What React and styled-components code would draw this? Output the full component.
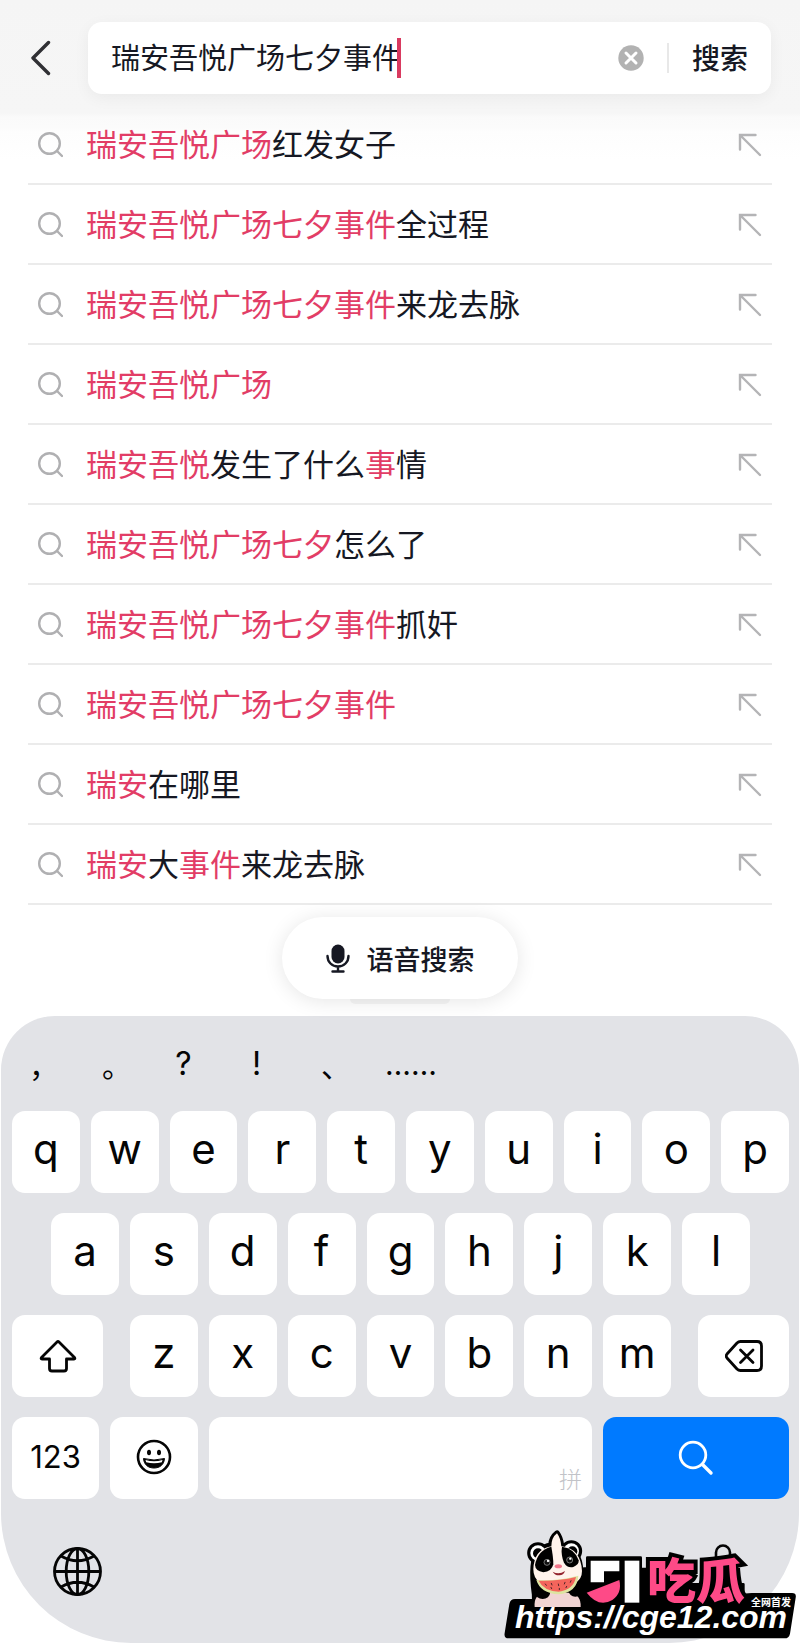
import React from 'react';
import styled, { createGlobalStyle } from 'styled-components';

const GlobalStyle = createGlobalStyle`
  *, *::before, *::after { box-sizing: border-box; }
  body {
    margin: 0;
    background: #fff;
    color: #161823;
    font-family: Inter, "Noto Sans CJK SC", sans-serif;
  }
  button, input { font: inherit; color: inherit; border: 0; padding: 0; background: none; }
  button { cursor: pointer; }
  svg { display: block; flex: none; }
`;

const Page = styled.div`
  position: relative;
  overflow: hidden;
  padding-bottom: 2px;
  background: linear-gradient(#f5f5f5 0, #f6f6f6 113px, #fafafa 117px, #fbfbfb 127px, #fdfdfd 131px, #fff 160px);
`;

const Header = styled.header`
  display: flex;
  align-items: center;
  gap: 36px;
  padding: 22px 29px 11px 31px;
`;

const BackButton = styled.button`
  width: 21px;
  height: 36px;
`;

const SearchForm = styled.form`
  flex: 1;
  min-width: 0;
  display: flex;
  align-items: center;
  height: 72px;
  padding: 0 23px;
  border-radius: 14px;
  background: #fff;
  box-shadow: 0 4px 16px rgba(0, 0, 0, 0.05);
`;

const SearchInput = styled.input`
  field-sizing: content;
  min-width: 0;
  height: 44px;
  padding-bottom: 4px;
  font-size: 29px;
  outline: none;
`;

const Caret = styled.span`
  flex: none;
  width: 4px;
  height: 40px;
  margin-left: -4px;
  background: #d93a60;
`;

const ClearButton = styled.button`
  margin-left: auto;
`;

const Separator = styled.span`
  flex: none;
  width: 2px;
  height: 30px;
  margin: 0 23px;
  background: #e8e8e8;
`;

const SubmitButton = styled.button`
  flex: none;
  padding-bottom: 2px;
  font-size: 28px;
  font-weight: 500;
`;

const Suggestions = styled.ul`
  list-style: none;
  margin: 0;
  padding: 0 28px;
`;

const Suggestion = styled.li`
  display: flex;
  align-items: center;
  justify-content: space-between;
  height: 80px;
  padding: 2px 10px 0 9px;
  border-bottom: 2px solid #ebebeb;
`;

const SuggestionButton = styled.button`
  display: flex;
  align-items: center;
  gap: 23px;
  font-size: 31px;
  line-height: 44px;
  white-space: nowrap;
`;

const Match = styled.span`
  color: #e23d66;
`;

const VoiceButton = styled.button`
  position: relative;
  display: flex;
  align-items: center;
  justify-content: center;
  gap: 17px;
  width: 236px;
  height: 82px;
  margin: 12px auto 17px;
  border-radius: 41px;
  background: #fff;
  box-shadow: 0 2px 20px rgba(0, 0, 0, 0.1);
  font-size: 27px;
  font-weight: 500;

  &::after {
    content: "";
    position: absolute;
    left: 68px;
    right: 68px;
    top: 100%;
    height: 5px;
    border-radius: 0 0 8px 8px;
    background: rgba(0, 0, 0, 0.04);
  }
`;

const Keyboard = styled.section`
  display: flex;
  flex-direction: column;
  gap: 20px;
  margin: 0 1px;
  padding: 0 10px 43px 11px;
  border-radius: 54px 54px 130px 130px;
  background: #e2e3e7;
  color: #050505;
`;

const Marks = styled.div`
  display: flex;
  height: 75px;
`;

const Mark = styled.button`
  width: 73px;
  padding: 20px ${(p) => (p.$full ? 0 : 22)}px 0 ${(p) => (p.$full ? 17 : 0)}px;
  text-align: ${(p) => (p.$full ? 'left' : 'center')};
  font-family: ${(p) => (p.$full ? '"Noto Sans CJK SC", sans-serif' : 'inherit')};
  font-size: ${(p) => (p.$full ? 30 : 32)}px;
  white-space: nowrap;

  &:last-child {
    padding-left: 8px;
    padding-right: 0;
    font-size: 30px;
    text-align: left;
  }
`;

const KeyRow = styled.div`
  display: flex;
  gap: 11px;
  padding: 0 ${(p) => p.$inset || 0}px;
`;

const Letters = styled.div`
  flex: 1;
  display: flex;
  gap: 11px;
  margin: 0 ${(p) => p.$space || 0}px;
`;

const Key = styled.button`
  flex: ${(p) => p.$grow || 1} 1 0;
  min-width: 0;
  height: 82px;
  display: flex;
  align-items: center;
  justify-content: center;
  padding-bottom: ${(p) => (p.$small ? 4 : 8)}px;
  border-radius: 13px;
  background: ${(p) => (p.$primary ? '#007aff' : '#fff')};
  color: ${(p) => (p.$primary ? '#fff' : 'inherit')};
  font-size: ${(p) => (p.$small ? 31 : 42)}px;
`;

const IconKey = styled(Key)`
  padding: 0;
`;

const SideKey = styled(IconKey)`
  flex: 0 0 91px;
`;

const SpaceKey = styled(IconKey)`
  align-items: flex-end;
  justify-content: flex-end;
`;

const SpaceHint = styled.span`
  margin: 0 10px 4px;
  color: #c2c3c8;
  font-size: 23px;
  font-weight: 300;
`;

const KeyboardFooter = styled.div`
  display: flex;
  align-items: center;
  justify-content: space-between;
  padding: 25px 49px 0 40px;
`;

const Watermark = styled.a`
  position: absolute;
  right: 4px;
  bottom: 6px;
  width: 292px;
  height: 110px;
  color: #fff;
  text-decoration: none;
  white-space: nowrap;
`;

const WatermarkArt = styled.svg`
  position: absolute;
  inset: 0;
`;

const Brand = styled.span`
  position: absolute;
  left: 143px;
  top: 28px;
  color: #fe4a87;
  font-family: "Noto Sans CJK SC", sans-serif;
  font-size: 49px;
  line-height: 42px;
  font-weight: 900;
  -webkit-text-stroke: 8px #000;
  paint-order: stroke fill;
`;

const Tagline = styled.span`
  position: absolute;
  right: 5px;
  top: 67px;
  font-family: "Noto Sans CJK SC", sans-serif;
  font-size: 10px;
  line-height: 12px;
  font-weight: 700;
`;

const Address = styled.span`
  position: absolute;
  left: 11px;
  top: 72px;
  font: italic 700 32px/32px "Liberation Sans", sans-serif;
`;

const SUGGESTIONS = [
  ['*瑞安吾悦广场', '红发女子'],
  ['*瑞安吾悦广场七夕事件', '全过程'],
  ['*瑞安吾悦广场七夕事件', '来龙去脉'],
  ['*瑞安吾悦广场'],
  ['*瑞安吾悦', '发生了什么', '*事', '情'],
  ['*瑞安吾悦广场七夕', '怎么了'],
  ['*瑞安吾悦广场七夕事件', '抓奸'],
  ['*瑞安吾悦广场七夕事件'],
  ['*瑞安', '在哪里'],
  ['*瑞安', '大', '*事件', '来龙去脉'],
];

const MARKS = [
  { text: '，', full: true },
  { text: '。', full: true },
  { text: '?' },
  { text: '!' },
  { text: '、', full: true },
  { text: '……' },
];

const SearchIcon = () => (
  <svg width="26" height="26" viewBox="0 0 26 26" fill="none" stroke="#b0b0b2" strokeWidth="2.4" strokeLinecap="round">
    <circle cx="12.5" cy="11.500" r="10.3" />
    <path d="M20 19l5 5" />
  </svg>
);

const FillIcon = () => (
  <svg width="24" height="24" viewBox="0 0 24 24" fill="none" stroke="#b4b4b6" strokeWidth="2.4" strokeLinecap="round">
    <path d="M2 16.500V2H17.500M2.500 2.500l19.500 19.500" />
  </svg>
);

const MicIcon = () => (
  <svg width="24" height="30" viewBox="0 0 24 30" fill="none" stroke="#161823" strokeWidth="2.4" strokeLinecap="round">
    <rect x="5.500" y="1.500" width="13" height="19" rx="6.500" fill="#161823" stroke="none" />
    <path d="M1.500 13c0 6 4.500 10.500 10.500 10.500s10.500-4.500 10.500-10.500M12 23.500V28M6.500 28.500h11" />
  </svg>
);

const ShiftIcon = () => (
  <svg width="38" height="34" viewBox="0 0 38 34" fill="none" stroke="currentColor" strokeWidth="2.800" strokeLinejoin="round">
    <path d="M18 3Q19 2 20 3L35.500 18.500Q36.500 20 35 20H27.500V29.500Q27.500 32 25 32H13Q10.500 32 10.500 29.500V20H3Q1.500 20 2.500 18.500Z" />
  </svg>
);

const DeleteIcon = () => (
  <svg width="38" height="32" viewBox="0 0 38 32" fill="none" stroke="currentColor" strokeWidth="2.800" strokeLinecap="round" strokeLinejoin="round">
    <path d="M15.500 1.500H32Q36.500 1.500 36.500 6V26Q36.500 30.500 32 30.500H15.500Q13.500 30.500 12 29L2 18Q.5 16 2 14L12 3Q13.500 1.500 15.500 1.500Z" />
    <path d="M15.500 10l12.500 12.500M28 10L15.500 22.500" />
  </svg>
);

const SmileIcon = () => (
  <svg width="36" height="38" viewBox="0 0 36 38">
    <circle cx="18" cy="18" r="16" fill="none" stroke="currentColor" strokeWidth="2.600" />
    <ellipse cx="13" cy="13.500" rx="2" ry="2.800" fill="currentColor" />
    <ellipse cx="23" cy="13.500" rx="2" ry="2.800" fill="currentColor" />
    <path d="M7.500 19.500Q18 22.500 28.500 19.500C28 26 23.500 29 18 29S8 26 7.500 19.500Z" fill="currentColor" stroke="currentColor" strokeLinejoin="round" />
    <path d="M9.500 21Q18 23.500 26.500 21L25.800 23.200Q18 25.500 10.200 23.200Z" fill="#fff" />
  </svg>
);

const GlobeIcon = () => (
  <svg width="50" height="50" viewBox="0 0 50 50" fill="none" stroke="currentColor" strokeWidth="2.800">
    <circle cx="25.500" cy="24.500" r="23" />
    <ellipse cx="25.500" cy="24.500" rx="11.300" ry="23" />
    <path d="M25.500 1.500v46M2.500 24.500h46M9 9Q25.500 18.500 42 9M9 40Q25.500 30.500 42 40" />
  </svg>
);

const DictationIcon = () => (
  <svg width="34" height="56" viewBox="0 0 34 56" fill="none" stroke="currentColor" strokeWidth="2.600" strokeLinecap="round">
    <rect x="10" y="1.500" width="14" height="32" rx="7" />
    <path d="M3 22v5c0 9 6 14 14 14s14-5 14-14v-5M17 41v9M9 51h16" />
  </svg>
);

const MascotArt = () => (
  <WatermarkArt width="292" height="110" viewBox="42 54 876 330" aria-hidden="true">
    <path d="M75 264H560L785 246H906Q920 246 917 260L900 368Q897 382 884 382H56Q41 382 44 366L58 279Q61 264 75 264Z" />
    <path d="M255 176L292 172V140H452V174H480V220H760V290H255Z" stroke="#000" strokeWidth="8" strokeLinejoin="round" />
    <g stroke="#000" strokeWidth="17" strokeLinejoin="round">
      <circle cx="144" cy="126" r="24" />
      <circle cx="244" cy="120" r="24" />
      <path d="M183 103Q184 80 201 67Q211 80 214 103Q270 112 272 185Q276 225 270 250L275 292H135L134 250Q120 150 145 120Q162 106 183 103Z" />
    </g>
    <circle cx="144" cy="126" r="23" fill="#fff" />
    <circle cx="144" cy="127" r="15" />
    <circle cx="244" cy="120" r="23" fill="#fff" />
    <circle cx="247" cy="121" r="15" />
    <path d="M134 288Q130 250 165 245H240Q274 250 272 288Z" fill="#f1d4d3" />
    <path d="M184 106Q184 80 201 67Q212 82 214 106Q272 112 276 180Q276 225 203 230Q130 225 130 175Q132 115 184 106Z" fill="#fff3ec" />
    <path d="M184 107Q190 140 190 160Q185 182 160 184Q136 180 135 162Q143 117 184 107Z" />
    <path d="M216 107Q212 130 222 155Q232 172 250 168Q268 160 266 148Q255 113 216 107Z" />
    <circle cx="171" cy="154" r="9" fill="#111" stroke="#aaa" strokeWidth="2" />
    <circle cx="239" cy="147" r="9" fill="#111" stroke="#aaa" strokeWidth="2" />
    <circle cx="174" cy="150" r="3.500" fill="#fff" />
    <circle cx="241" cy="143" r="3.500" fill="#fff" />
    <ellipse cx="205" cy="166" rx="11" ry="6" fill="#f2778b" />
    <path d="M188 182Q207 192 225 180Q220 194 207 193Q194 193 188 182Z" fill="#93232e" />
    <ellipse cx="158" cy="247" rx="22" ry="17" />
    <ellipse cx="256" cy="240" rx="20" ry="17" />
    <path d="M139 207Q200 211 265 194Q262 244 206 250Q151 247 139 207Z" fill="#dde4a0" />
    <path d="M146 209Q203 211 258 198Q251 236 206 242Q160 239 146 209Z" fill="#f4655c" />
    <path d="M166 219l3 4M184 217l2 5M205 219l1 5M225 214l-2 5M243 209l-2 5M183 229l2 4M208 232v4M230 226l-2 4" stroke="#50262a" strokeWidth="3" strokeLinecap="round" />
    <path d="M302 149H388V181H342V214H302Z" fill="#fff" />
    <path d="M404 149H448V275H404Z" fill="#fff" />
    <path d="M388 207Q397 246 367 267Q326 291 290 245Z" fill="#fe4a87" />
  </WatermarkArt>
);

const letterKeys = (letters) => letters.split('').map((c) => <Key type="button" key={c}>{c}</Key>);

export default function App() {
  return (
    <Page>
      <GlobalStyle />
      <Header>
        <BackButton type="button" aria-label="返回">
          <svg width="21" height="36" viewBox="0 0 21 36" fill="none" stroke="#303034" strokeWidth="3.400" strokeLinecap="round" strokeLinejoin="round">
            <path d="M17.500 2.500L2 18L17.500 33.500" />
          </svg>
        </BackButton>
        <SearchForm onSubmit={(e) => e.preventDefault()}>
          <SearchInput aria-label="搜索内容" defaultValue="瑞安吾悦广场七夕事件" />
          <Caret />
          <ClearButton type="button" aria-label="清除">
            <svg width="26" height="26" viewBox="0 0 26 26">
              <circle cx="13" cy="13" r="12.700" fill="#b2b2b2" />
              <path d="M8 8l10 10M18 8L8 18" stroke="#fff" strokeWidth="3" strokeLinecap="round" />
            </svg>
          </ClearButton>
          <Separator />
          <SubmitButton type="submit">搜索</SubmitButton>
        </SearchForm>
      </Header>

      <main>
        <Suggestions>
          {SUGGESTIONS.map((parts) => (
            <Suggestion key={parts.join('')}>
              <SuggestionButton type="button">
                <SearchIcon />
                <span>
                  {parts.map((part, i) =>
                    part[0] === '*' ? <Match key={i}>{part.slice(1)}</Match> : <span key={i}>{part}</span>
                  )}
                </span>
              </SuggestionButton>
              <button type="button" aria-label="填入搜索框"><FillIcon /></button>
            </Suggestion>
          ))}
        </Suggestions>
        <VoiceButton type="button"><MicIcon />语音搜索</VoiceButton>
      </main>

      <Keyboard aria-label="键盘">
        <Marks>
          {MARKS.map((m) => <Mark type="button" key={m.text} $full={m.full}>{m.text}</Mark>)}
        </Marks>
        <KeyRow>{letterKeys('qwertyuiop')}</KeyRow>
        <KeyRow $inset={39}>{letterKeys('asdfghjkl')}</KeyRow>
        <KeyRow>
          <SideKey type="button" aria-label="大写"><ShiftIcon /></SideKey>
          <Letters $space={16}>{letterKeys('zxcvbnm')}</Letters>
          <SideKey type="button" aria-label="删除"><DeleteIcon /></SideKey>
        </KeyRow>
        <KeyRow>
          <Key type="button" $grow={87} $small>123</Key>
          <IconKey type="button" $grow={88} aria-label="表情"><SmileIcon /></IconKey>
          <SpaceKey type="button" $grow={383}><SpaceHint>拼</SpaceHint></SpaceKey>
          <IconKey type="button" $grow={186} $primary aria-label="搜索">
            <svg width="36" height="36" viewBox="0 0 36 36" fill="none" stroke="currentColor" strokeWidth="2.800" strokeLinecap="round">
              <circle cx="15" cy="15" r="12.800" />
              <path d="M24.500 24.500l8.500 8.500" strokeWidth="3.400" />
            </svg>
          </IconKey>
        </KeyRow>
        <KeyboardFooter>
          <button type="button" aria-label="切换输入法"><GlobeIcon /></button>
          <button type="button" aria-label="听写"><DictationIcon /></button>
        </KeyboardFooter>
      </Keyboard>

      <Watermark href="https://cge12.com">
        <MascotArt />
        <Brand>吃瓜</Brand>
        <Tagline>全网首发</Tagline>
        <Address>https://cge12.com</Address>
      </Watermark>
    </Page>
  );
}
